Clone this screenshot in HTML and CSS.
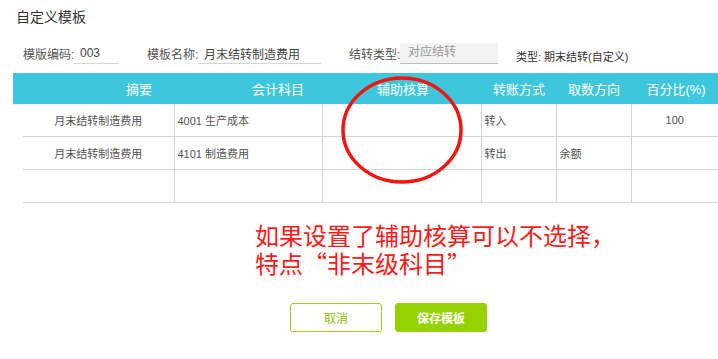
FILE: index.html
```html
<!DOCTYPE html>
<html lang="zh">
<head>
    <meta charset="UTF-8">
    <meta name="viewport" content="width=device-width, initial-scale=1.0">
    <title>自定义模板</title>
    <link rel="stylesheet" href="styles.css">
</head>
<body>

    <div class="title">自定义模板</div>

    <div class="form-row">
        <label class="lbl">模版编码:</label>
        <input class="line-input code" type="text" value="003" readonly>

        <label class="lbl lbl-gap">模板名称:</label>
        <input class="line-input name" type="text" value="月末结转制造费用" readonly>

        <label class="lbl lbl-gap">结转类型:</label>
        <div class="select-box">对应结转</div>

        <span class="type-text">类型: 期末结转(自定义)</span>
    </div>

    <div class="grid-head">
        <span class="h1">摘要</span>
        <span class="h2">会计科目</span>
        <span class="h3">辅助核算</span>
        <span class="h4">转账方式</span>
        <span class="h5">取数方向</span>
        <span class="h6">百分比(%)</span>
    </div>

    <table class="grid-body">
        <colgroup>
            <col class="c1"><col class="c2"><col class="c3"><col class="c4"><col class="c5"><col class="c6">
        </colgroup>
        <tr>
            <td class="center">月末结转制造费用</td>
            <td>4001 生产成本</td>
            <td></td>
            <td>转入</td>
            <td></td>
            <td class="center">100</td>
        </tr>
        <tr>
            <td class="center">月末结转制造费用</td>
            <td>4101 制造费用</td>
            <td></td>
            <td>转出</td>
            <td>余额</td>
            <td></td>
        </tr>
        <tr>
            <td></td><td></td><td></td><td></td><td></td><td></td>
        </tr>
    </table>

    <!-- 红圈标注 -->
    <svg class="circle-mark" width="126" height="112" viewBox="0 0 126 112">
        <ellipse cx="63" cy="56" rx="59" ry="52" fill="none" stroke="#f2150f" stroke-width="3.5"/>
    </svg>

    <div class="note">
        如果设置了辅助核算可以不选择，<br>
        特点“非末级科目”
    </div>

    <div class="actions">
        <button class="btn btn-cancel">取消</button>
        <button class="btn btn-save">保存模板</button>
    </div>

</body>
</html>
```

FILE: styles.css
```css
body {
    margin: 0;
    font-family: "Liberation Sans", "Noto Sans CJK SC", sans-serif;
    color: #555;
    background: #fff;
    position: relative;
    width: 718px;
    height: 359px;
    overflow: hidden;
}
.title {
    height: 34px;
    line-height: 34px;
    padding-left: 16px;
    font-size: 14px;
    color: #333;
}
.form-row {
    display: flex;
    align-items: center;
    height: 21px;
    margin: 9px 0 9px 23px;
    font-size: 12px;
}
.lbl {
    width: 51px;
    color: #555;
    white-space: nowrap;
}
.lbl-gap {
    margin-left: 28px;
}
.line-input {
    height: 21px;
    box-sizing: border-box;
    border: none;
    border-bottom: 1px solid #d6d6d6;
    padding: 0 6px;
    font-family: "Liberation Sans", "Noto Sans CJK SC", sans-serif;
    font-size: 12px;
    color: #444;
    outline: none;
}
.code {
    width: 45px;
}
.name {
    width: 123px;
}
.select-box {
    width: 98px;
    height: 21px;
    box-sizing: border-box;
    background: #f3f3f3;
    border-bottom: 1px solid #bdbdbd;
    padding-left: 8px;
    line-height: 19px;
    color: #999;
}
.type-text {
    margin-left: 18px;
    margin-top: 4px;
    color: #333;
    font-size: 11px;
}
.grid-head {
    display: flex;
    align-items: center;
    height: 31px;
    margin-left: 13px;
    padding-left: 31px;
    background: #3ec7dc;
    color: #fff;
    font-size: 13px;
}
.grid-head span {
    text-align: center;
    white-space: nowrap;
}
.h1 { width: 190px; }
.h2 { width: 88px; }
.h3 { width: 162px; }
.h4 { width: 70px; }
.h5 { width: 80px; }
.h6 { width: 84px; }
.grid-body {
    margin-left: 23px;
    width: 695px;
    border-collapse: collapse;
    table-layout: fixed;
    font-size: 11px;
    color: #555;
}
.c1 { width: 151px; }
.c2 { width: 148px; }
.c3 { width: 159px; }
.c4 { width: 75px; }
.c5 { width: 75px; }
.c6 { width: 87px; }
.grid-body td {
    height: 32px;
    padding: 0 3px;
    border-bottom: 1px solid #d4d4d4;
    border-right: 1px solid #d4d4d4;
    white-space: nowrap;
}
.grid-body td:last-child {
    border-right: none;
}
.grid-body td.center {
    text-align: center;
}
.circle-mark {
    position: absolute;
    left: 339px;
    top: 74px;
}
.note {
    margin: 18px 0 0 255px;
    font-family: "Noto Sans CJK SC", sans-serif;
    font-size: 24px;
    line-height: 28px;
    color: #ff1a1a;
}
.actions {
    display: flex;
    gap: 13px;
    margin: 26px 0 0 290px;
}
.btn {
    width: 92px;
    height: 29px;
    border-radius: 3px;
    font-family: "Noto Sans CJK SC", sans-serif;
    font-size: 12px;
    cursor: pointer;
}
.btn-cancel {
    background: #fff;
    border: 1px solid #9ad21a;
    color: #8cc20a;
}
.btn-save {
    background: #96d200;
    border: 1px solid #96d200;
    color: #fff;
    font-weight: bold;
}
```
